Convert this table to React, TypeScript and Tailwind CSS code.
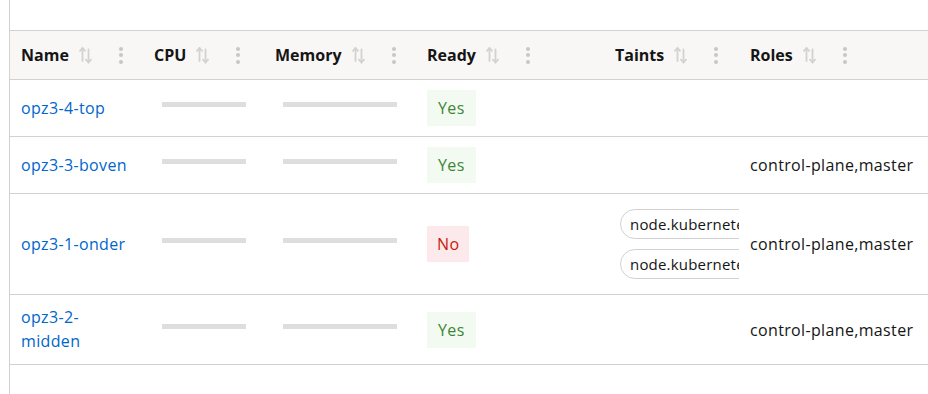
import React from 'react';

const font = { fontFamily: '"Open Sans", "Noto Sans", sans-serif' };

function SortIcon() {
  return (
    <svg width="13" height="18" viewBox="0 0 13 18" className="shrink-0">
      <g stroke="#d2d2d2" strokeWidth="1.8" fill="none" strokeLinecap="round" strokeLinejoin="round">
        <path d="M3.5 2v13" />
        <path d="M1 4.8 3.5 2 6 4.8" />
        <path d="M9.5 3.5v13" />
        <path d="M7 13.7 9.5 16.5 12 13.7" />
      </g>
    </svg>
  );
}

function Kebab() {
  return (
    <span className="flex flex-col gap-[2.5px] shrink-0">
      <span className="w-[4px] h-[4px] rounded-full bg-[#c7c7c7]" />
      <span className="w-[4px] h-[4px] rounded-full bg-[#c7c7c7]" />
      <span className="w-[4px] h-[4px] rounded-full bg-[#c7c7c7]" />
    </span>
  );
}

function Bar({ w }: { w: string }) {
  return <div className={`h-[5px] bg-[#dedede] ml-[8px] mb-[7px] ${w}`} />;
}

function Ready({ ok }: { ok: boolean }) {
  return ok ? (
    <span className="inline-flex items-center h-9 px-[11px] bg-[#f3faf2] text-[#3e8635]">Yes</span>
  ) : (
    <span className="inline-flex items-center h-9 px-[10px] bg-[#fbe9eb] text-[#c9190b]">No</span>
  );
}

function Chip({ label }: { label: string }) {
  return (
    <span className="flex items-center h-[30px] pl-[9px] pr-3 border border-[#d2d2d2] rounded-full whitespace-nowrap text-[15px] tracking-[0.2px] w-max">
      {label}
    </span>
  );
}

const rows = [
  { name: 'opz3-4-top', ok: true, taints: [] as string[], roles: '' },
  { name: 'opz3-3-boven', ok: true, taints: [], roles: 'control-plane,master' },
  {
    name: 'opz3-1-onder',
    ok: false,
    taints: ['node.kubernetes.io/unreachable:NoExecute', 'node.kubernetes.io/unreachable:NoSchedule'],
    roles: 'control-plane,master',
  },
  { name: 'opz3-2-midden', ok: true, taints: [], roles: 'control-plane,master' },
];

const headers = ['Name', 'CPU', 'Memory', 'Ready', 'Taints', 'Roles'];

export default function App() {
  return (
    <div className="w-[928px] h-[394px] bg-white overflow-hidden text-[#151515] text-base leading-6" style={font}>
      <div className="ml-[9px] h-full border-l border-[#d2d2d2] pt-[30px]">
        <table className="table-fixed w-[919px] border-collapse">
          <colgroup>
            <col className="w-[133px]" />
            <col className="w-[121px]" />
            <col className="w-[152px]" />
            <col className="w-[188px]" />
            <col className="w-[135px]" />
            <col />
          </colgroup>
          <thead>
            <tr className="bg-[#f8f7f6] border-y border-[#d2d2d2] h-[49px]">
              {headers.map((h) => (
                <th key={h} className="px-[11px] text-left font-bold align-middle">
                  <div className="flex items-center">
                    <span>{h}</span>
                    <span className="ml-[10px]"><SortIcon /></span>
                    <span className="ml-[27px]"><Kebab /></span>
                  </div>
                </th>
              ))}
            </tr>
          </thead>
          <tbody className="tracking-[0.35px]">
            {rows.map((r, i) => (
              <tr key={r.name} className="border-b border-[#d2d2d2]">
                <td className={`pl-[11px] pr-[11px] align-middle text-[#0066cc] ${i === 3 ? 'pt-[10px] pb-[11px]' : 'py-[10px]'}`}>{r.name}</td>
                <td className="px-[11px] py-[10px] align-middle"><Bar w="w-[84px]" /></td>
                <td className="px-[11px] py-[10px] align-middle"><Bar w="w-[114px]" /></td>
                <td className="px-[11px] py-[10px] align-middle"><Ready ok={r.ok} /></td>
                <td className="pl-[11px] pr-0 py-[10px] align-middle overflow-hidden">
                  {r.taints.length > 0 && (
                    <div className="flex flex-col gap-[10px] py-[5px] ml-[5px]">
                      {r.taints.map((t) => (
                        <Chip key={t} label={t} />
                      ))}
                    </div>
                  )}
                </td>
                <td className="px-[11px] py-[10px] align-middle whitespace-nowrap">{r.roles}</td>
              </tr>
            ))}
          </tbody>
        </table>
      </div>
    </div>
  );
}
